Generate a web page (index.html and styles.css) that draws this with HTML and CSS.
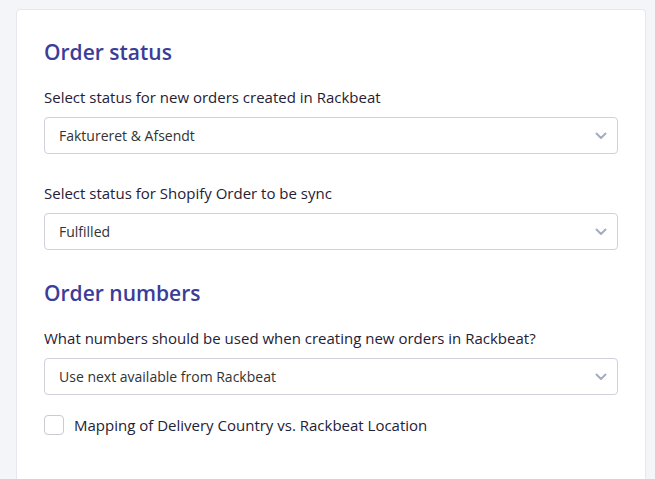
FILE: index.html
```html
<!DOCTYPE html>
<html lang="en">
<head>
    <meta charset="UTF-8">
    <meta name="viewport" content="width=device-width, initial-scale=1.0">
    <title>Order settings</title>
    <link rel="stylesheet" href="styles.css">
</head>
<body>
    <div class="card">
        <h2 class="section-title">Order status</h2>

        <div class="field">
            <label class="field-label">Select status for new orders created in Rackbeat</label>
            <div class="select">
                <span>Faktureret &amp; Afsendt</span>
                <svg class="chevron" width="12" height="8" viewBox="0 0 12 8"><path d="M1.5 1.5 L6 6 L10.5 1.5" fill="none" stroke="#a8abbf" stroke-width="2" stroke-linecap="round" stroke-linejoin="round"/></svg>
            </div>
        </div>

        <div class="field">
            <label class="field-label">Select status for Shopify Order to be sync</label>
            <div class="select">
                <span>Fulfilled</span>
                <svg class="chevron" width="12" height="8" viewBox="0 0 12 8"><path d="M1.5 1.5 L6 6 L10.5 1.5" fill="none" stroke="#a8abbf" stroke-width="2" stroke-linecap="round" stroke-linejoin="round"/></svg>
            </div>
        </div>

        <h2 class="section-title second">Order numbers</h2>

        <div class="field">
            <label class="field-label">What numbers should be used when creating new orders in Rackbeat?</label>
            <div class="select">
                <span>Use next available from Rackbeat</span>
                <svg class="chevron" width="12" height="8" viewBox="0 0 12 8"><path d="M1.5 1.5 L6 6 L10.5 1.5" fill="none" stroke="#a8abbf" stroke-width="2" stroke-linecap="round" stroke-linejoin="round"/></svg>
            </div>
        </div>

        <label class="check">
            <span class="box"></span>
            <span>Mapping of Delivery Country vs. Rackbeat Location</span>
        </label>
    </div>
</body>
</html>
```

FILE: styles.css
```css
body {
    font-family: 'Open Sans', sans-serif;
    background: #f4f5f9;
    margin: 0;
    padding: 9px 9px 0 16px;
}

.card {
    background: #fff;
    border: 1px solid #e5e6ee;
    border-radius: 4px;
    padding: 27px 27px 60px 27px;
}

.section-title {
    margin: 0;
    font-size: 21px;
    line-height: 30px;
    font-weight: 600;
    color: #3b3d98;
}

.section-title.second {
    margin-top: 28px;
}

.field {
    margin-top: 20px;
}

.field + .field {
    margin-top: 29px;
}

.second + .field {
    margin-top: 20px;
}

.field-label {
    display: block;
    font-size: 15px;
    line-height: 20px;
    color: #1f2136;
    margin-bottom: 10px;
}

.select {
    display: flex;
    align-items: center;
    justify-content: space-between;
    height: 35px;
    padding: 0 10px 0 14px;
    border: 1px solid #cfd1dc;
    border-radius: 4px;
    font-size: 14px;
    color: #333;
}

.chevron {
    display: block;
}

.check {
    display: flex;
    align-items: center;
    gap: 10px;
    margin-top: 20px;
    font-size: 15px;
    color: #1f2136;
}

.box {
    width: 18px;
    height: 18px;
    border: 1px solid #c8cad6;
    border-radius: 4px;
}
```
